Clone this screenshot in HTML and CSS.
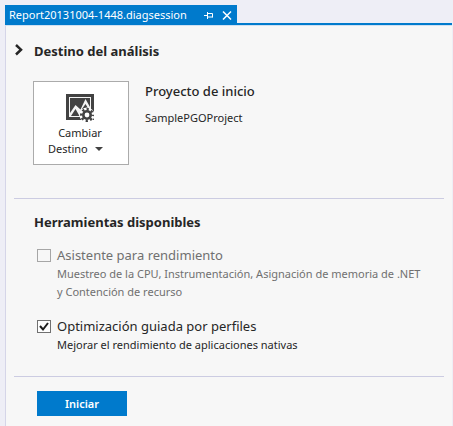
FILE: index.html
```html
<!DOCTYPE html>
<html lang="es">
<head>
<meta charset="utf-8">
<title>Report20131004-1448.diagsession</title>
<link rel="stylesheet" href="styles.css">
</head>
<body>
<header class="tabs">
  <div class="tab">
    <span class="tab-name">Report20131004-1448.diagsession</span>
    <button class="tab-button" type="button" aria-label="Anclar">
      <svg width="9" height="9" viewBox="0 0 9 9"><path d="M0 4.5H3M3.5 1V8M3.5 2.5H8.5V6.5M3.5 6H8.5" fill="none" stroke="currentColor"/></svg>
    </button>
    <button class="tab-button" type="button" aria-label="Cerrar">
      <svg width="10" height="9" viewBox="0 0 10 9"><path d="M1 .5L9 8.5M9 .5L1 8.5" fill="none" stroke="currentColor" stroke-width="1.5"/></svg>
    </button>
  </div>
</header>
<main class="panel">
  <section class="target">
    <h2 class="heading">
      <svg class="chevron" width="8" height="12" viewBox="0 0 8 12"><path d="M1 1L6 5.700L1 10.500" fill="none" stroke="currentColor" stroke-width="2.500"/></svg>
      Destino del análisis
    </h2>
    <div class="target-row">
      <button class="change" type="button">
        <svg width="28" height="28" viewBox="0 0 28 28">
          <path d="M0 0H28V26H0Z" fill="#424242"/>
          <path d="M3 3H25V23H3Z" fill="#f4f4f4"/>
          <path d="M4 4H24V13L19.500 5L14.500 15.500L9.500 11L4 19Z" fill="#424242"/>
          <path d="M5 22L9.500 15L13.500 22ZM16 15L19.500 10L22.500 15Z" fill="#424242"/>
          <circle cx="21" cy="21" r="7.500" fill="#fff"/>
          <circle cx="21" cy="21" r="3.700" fill="#fff" stroke="#424242" stroke-width="2.600"/>
          <circle cx="21" cy="21" r="5.800" fill="none" stroke="#424242" stroke-width="2.400" stroke-dasharray="2.278 2.278" stroke-dashoffset="1.139"/>
        </svg>
        <span>Cambiar</span>
        <span class="change-line">Destino <svg width="8" height="4" viewBox="0 0 8 4"><path d="M0 0H8L4 4Z" fill="#424242"/></svg></span>
      </button>
      <div class="project">
        <h3 class="project-title">Proyecto de inicio</h3>
        <p class="project-name">SamplePGOProject</p>
      </div>
    </div>
  </section>
  <section class="tools">
    <h2 class="heading">Herramientas disponibles</h2>
    <div class="tool tool-off">
      <input class="check" type="checkbox" id="wizard" disabled>
      <label class="tool-name" for="wizard">Asistente para rendimiento</label>
      <p class="tool-text">Muestreo de la CPU, Instrumentación, Asignación de memoria de .NET<br>y Contención de recurso</p>
    </div>
    <div class="tool">
      <input class="check" type="checkbox" id="pgo" checked>
      <label class="tool-name" for="pgo">Optimización guiada por perfiles</label>
      <p class="tool-text">Mejorar el rendimiento de aplicaciones nativas</p>
    </div>
  </section>
  <footer class="actions">
    <button class="start" type="button">Iniciar</button>
  </footer>
</main>
</body>
</html>
```
FILE: styles.css
```css
* {
  box-sizing: border-box;
}

body {
  display: flex;
  flex-direction: column;
  min-height: 100vh;
  margin: 0;
  padding: 5px 1px 1px 5px;
  background: #eeeef6;
  color: #262626;
  font-family: "Noto Sans", "Open Sans", sans-serif;
  font-size: 11px;
}

h2,
h3,
p {
  margin: 0;
}

button {
  padding: 0;
  font: inherit;
  color: inherit;
}

.tabs {
  border-bottom: 2px solid #007acc;
}

.tab {
  display: flex;
  align-items: center;
  width: fit-content;
  height: 18px;
  padding: 2px 5px 0 4px;
  background: #007acc;
  color: #fff;
}

.tab-name {
  margin-right: 17px;
  line-height: 16px;
}

.tab-button {
  display: flex;
  margin-left: 9px;
  border: 0;
  background: none;
}

.tab-name + .tab-button {
  margin-left: 0;
}

.panel {
  flex: 1;
  padding: 0 8px;
  border-top: 1px solid #cfe0f2;
  border-left: 1px solid #d5d5e8;
  background: #f7f7f7;
}

.target,
.tools {
  padding-left: 20px;
  border-bottom: 1px solid #cccce2;
}

.target {
  padding-top: 15px;
  padding-bottom: 33px;
}

.tools {
  padding-top: 13px;
  padding-bottom: 22px;
}

.heading {
  position: relative;
  font-size: 13px;
  font-weight: 700;
  line-height: 20px;
}

.chevron {
  position: absolute;
  top: 3px;
  left: -19px;
}

.target-row {
  display: flex;
  gap: 16px;
  margin-top: 20px;
}

.change {
  display: flex;
  flex-direction: column;
  align-items: center;
  width: 96px;
  height: 84px;
  margin-left: -1px;
  padding: 12px 10px 0 8px;
  border: 1px solid #ababab;
  background: #fff;
  line-height: 16px;
}

.change svg {
  flex: none;
}

.change > svg {
  margin-bottom: 3px;
}

.change-line {
  display: flex;
  align-items: center;
  align-self: flex-start;
  gap: 7px;
  padding-left: 6px;
}

.project-title {
  font-size: 13px;
  font-weight: 500;
  line-height: 20px;
}

.project-name {
  margin-top: 8px;
  line-height: 18px;
}

.tool {
  display: grid;
  grid-template-columns: 14px 1fr;
  column-gap: 6px;
  align-items: center;
  margin: 14px 0 0 3px;
}

.tool + .tool {
  margin-top: 16px;
}

.tool-off {
  color: #707070;
}

.check {
  width: 14px;
  height: 13px;
  margin: 0;
  appearance: none;
  border: 1px solid #707070;
  background: #fefefe;
}

.check:disabled {
  border-color: #a6a6a6;
  background: #f7f7f7;
}

.check:checked {
  background: #fefefe url("data:image/svg+xml,%3Csvg xmlns='http://www.w3.org/2000/svg' viewBox='0 0 12 11'%3E%3Cpath d='M2 5L5 8.500L10 2' fill='none' stroke='%231e1e1e' stroke-width='2'/%3E%3C/svg%3E") center / 12px 11px no-repeat;
}

.tool-name {
  font-size: 13px;
  line-height: 18px;
}

.tool-text {
  grid-column: 2;
  margin-top: 1px;
  line-height: 18px;
}

.actions {
  padding: 14px 0 10px 23px;
}

.start {
  width: 90px;
  height: 25px;
  border: 0;
  background: #007acc;
  color: #fff;
  font-weight: 600;
}
```
